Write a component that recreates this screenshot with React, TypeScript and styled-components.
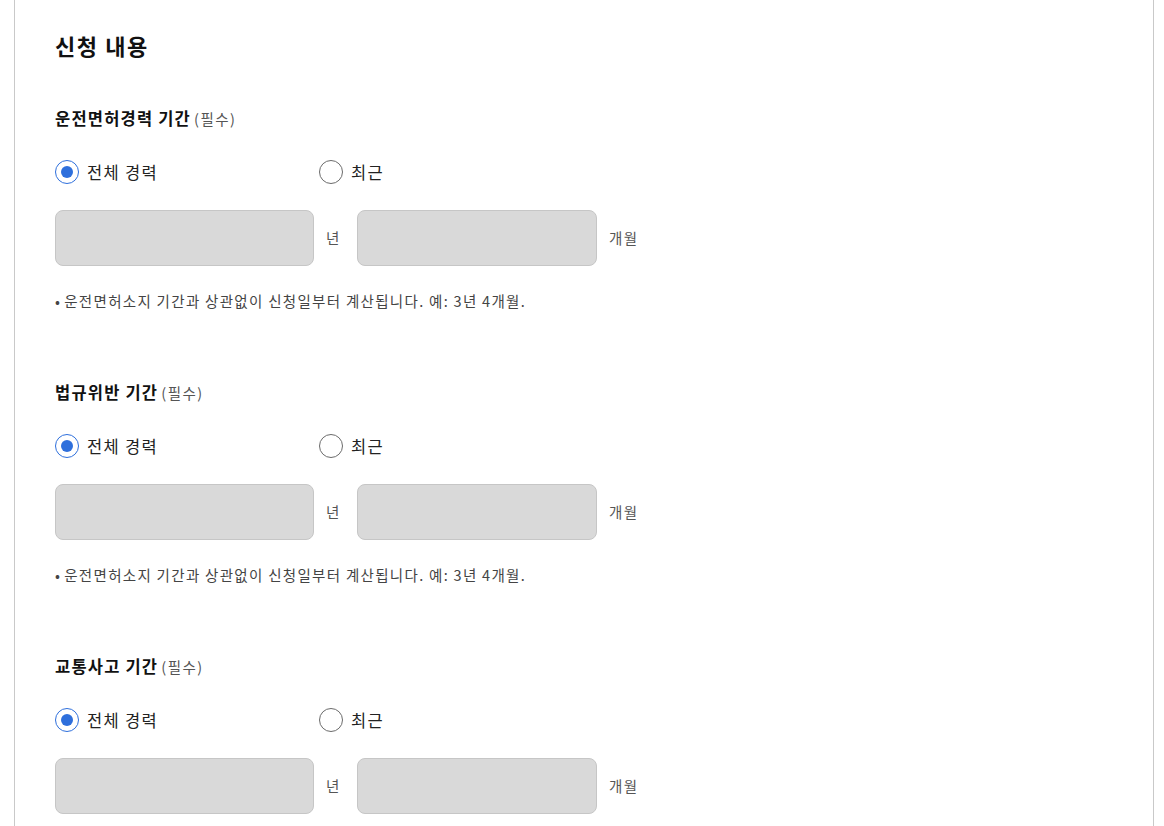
import React from "react";
import styled, { createGlobalStyle } from "styled-components";

const GlobalStyle = createGlobalStyle`
  html, body {
    margin: 0;
    padding: 0;
    background: #ffffff;
  }
  body {
    font-family: "Noto Sans CJK KR", "Noto Sans", sans-serif;
    color: #222222;
    overflow: hidden;
  }
`;

const Panel = styled.div`
  margin: 0 10px 0 14px;
  min-height: 826px;
  box-sizing: border-box;
  border-left: 1px solid #c9c9c9;
  border-right: 1px solid #c9c9c9;
  padding: 29px 40px 40px;
`;

const Title = styled.h2`
  margin: 0;
  font-size: 22px;
  line-height: 32px;
  font-weight: 700;
  letter-spacing: 1.6px;
  color: #111111;
`;

const Section = styled.section`
  margin-top: 45px;

  & + & {
    margin-top: 69px;
  }
`;

const Label = styled.div`
  font-size: 16.5px;
  line-height: 24px;
  font-weight: 700;
  letter-spacing: 1.2px;
  color: #111111;
`;

const Required = styled.span`
  font-size: 14.5px;
  font-weight: 400;
  letter-spacing: 1.5px;
  color: #555555;
  margin-left: 3px;
`;

const RadioGroup = styled.div`
  display: flex;
  margin-top: 29px;
  height: 24px;
`;

const RadioOption = styled.label`
  display: flex;
  align-items: center;
  gap: 8px;
  width: 264px;
  font-size: 16.5px;
  line-height: 24px;
  letter-spacing: 1.3px;
  color: #222222;
  cursor: pointer;
`;

const RadioCircle = styled.span<{ $checked?: boolean }>`
  position: relative;
  box-sizing: border-box;
  width: 24px;
  height: 24px;
  border-radius: 50%;
  border: 1px solid ${(p) => (p.$checked ? "#2e6fdc" : "#6b6b6b")};
  background: #ffffff;
  flex-shrink: 0;

  &::after {
    content: "";
    display: ${(p) => (p.$checked ? "block" : "none")};
    position: absolute;
    top: 50%;
    left: 50%;
    width: 12px;
    height: 12px;
    margin: -6px 0 0 -6px;
    border-radius: 50%;
    background: #2e6fdc;
  }
`;

const InputRow = styled.div`
  display: flex;
  align-items: center;
  gap: 12px;
  margin-top: 26px;
`;

const Field = styled.div<{ $width: number }>`
  box-sizing: border-box;
  width: ${(p) => p.$width}px;
  height: 56px;
  border-radius: 8px;
  border: 1px solid #c6c6c6;
  background: #d9d9d9;
`;

const Unit = styled.span<{ $width?: number }>`
  font-size: 14.5px;
  line-height: 20px;
  letter-spacing: 1.5px;
  color: #555555;
  width: ${(p) => (p.$width ? `${p.$width}px` : "auto")};
`;

const Help = styled.p`
  margin: 25px 0 0;
  font-size: 14.5px;
  line-height: 20px;
  letter-spacing: 1.3px;
  color: #444444;

  &::before {
    content: "•";
    margin-right: 3px;
  }
`;

const sections = ["운전면허경력 기간", "법규위반 기간", "교통사고 기간"];

export default function App() {
  return (
    <>
      <GlobalStyle />
      <Panel>
        <Title>신청 내용</Title>
        {sections.map((name) => (
          <Section key={name}>
            <Label>
              {name}
              <Required>(필수)</Required>
            </Label>
            <RadioGroup>
              <RadioOption>
                <RadioCircle $checked />
                전체 경력
              </RadioOption>
              <RadioOption>
                <RadioCircle />
                최근
              </RadioOption>
            </RadioGroup>
            <InputRow>
              <Field $width={259} />
              <Unit $width={19}>년</Unit>
              <Field $width={240} />
              <Unit>개월</Unit>
            </InputRow>
            <Help>운전면허소지 기간과 상관없이 신청일부터 계산됩니다. 예: 3년 4개월.</Help>
          </Section>
        ))}
      </Panel>
    </>
  );
}
